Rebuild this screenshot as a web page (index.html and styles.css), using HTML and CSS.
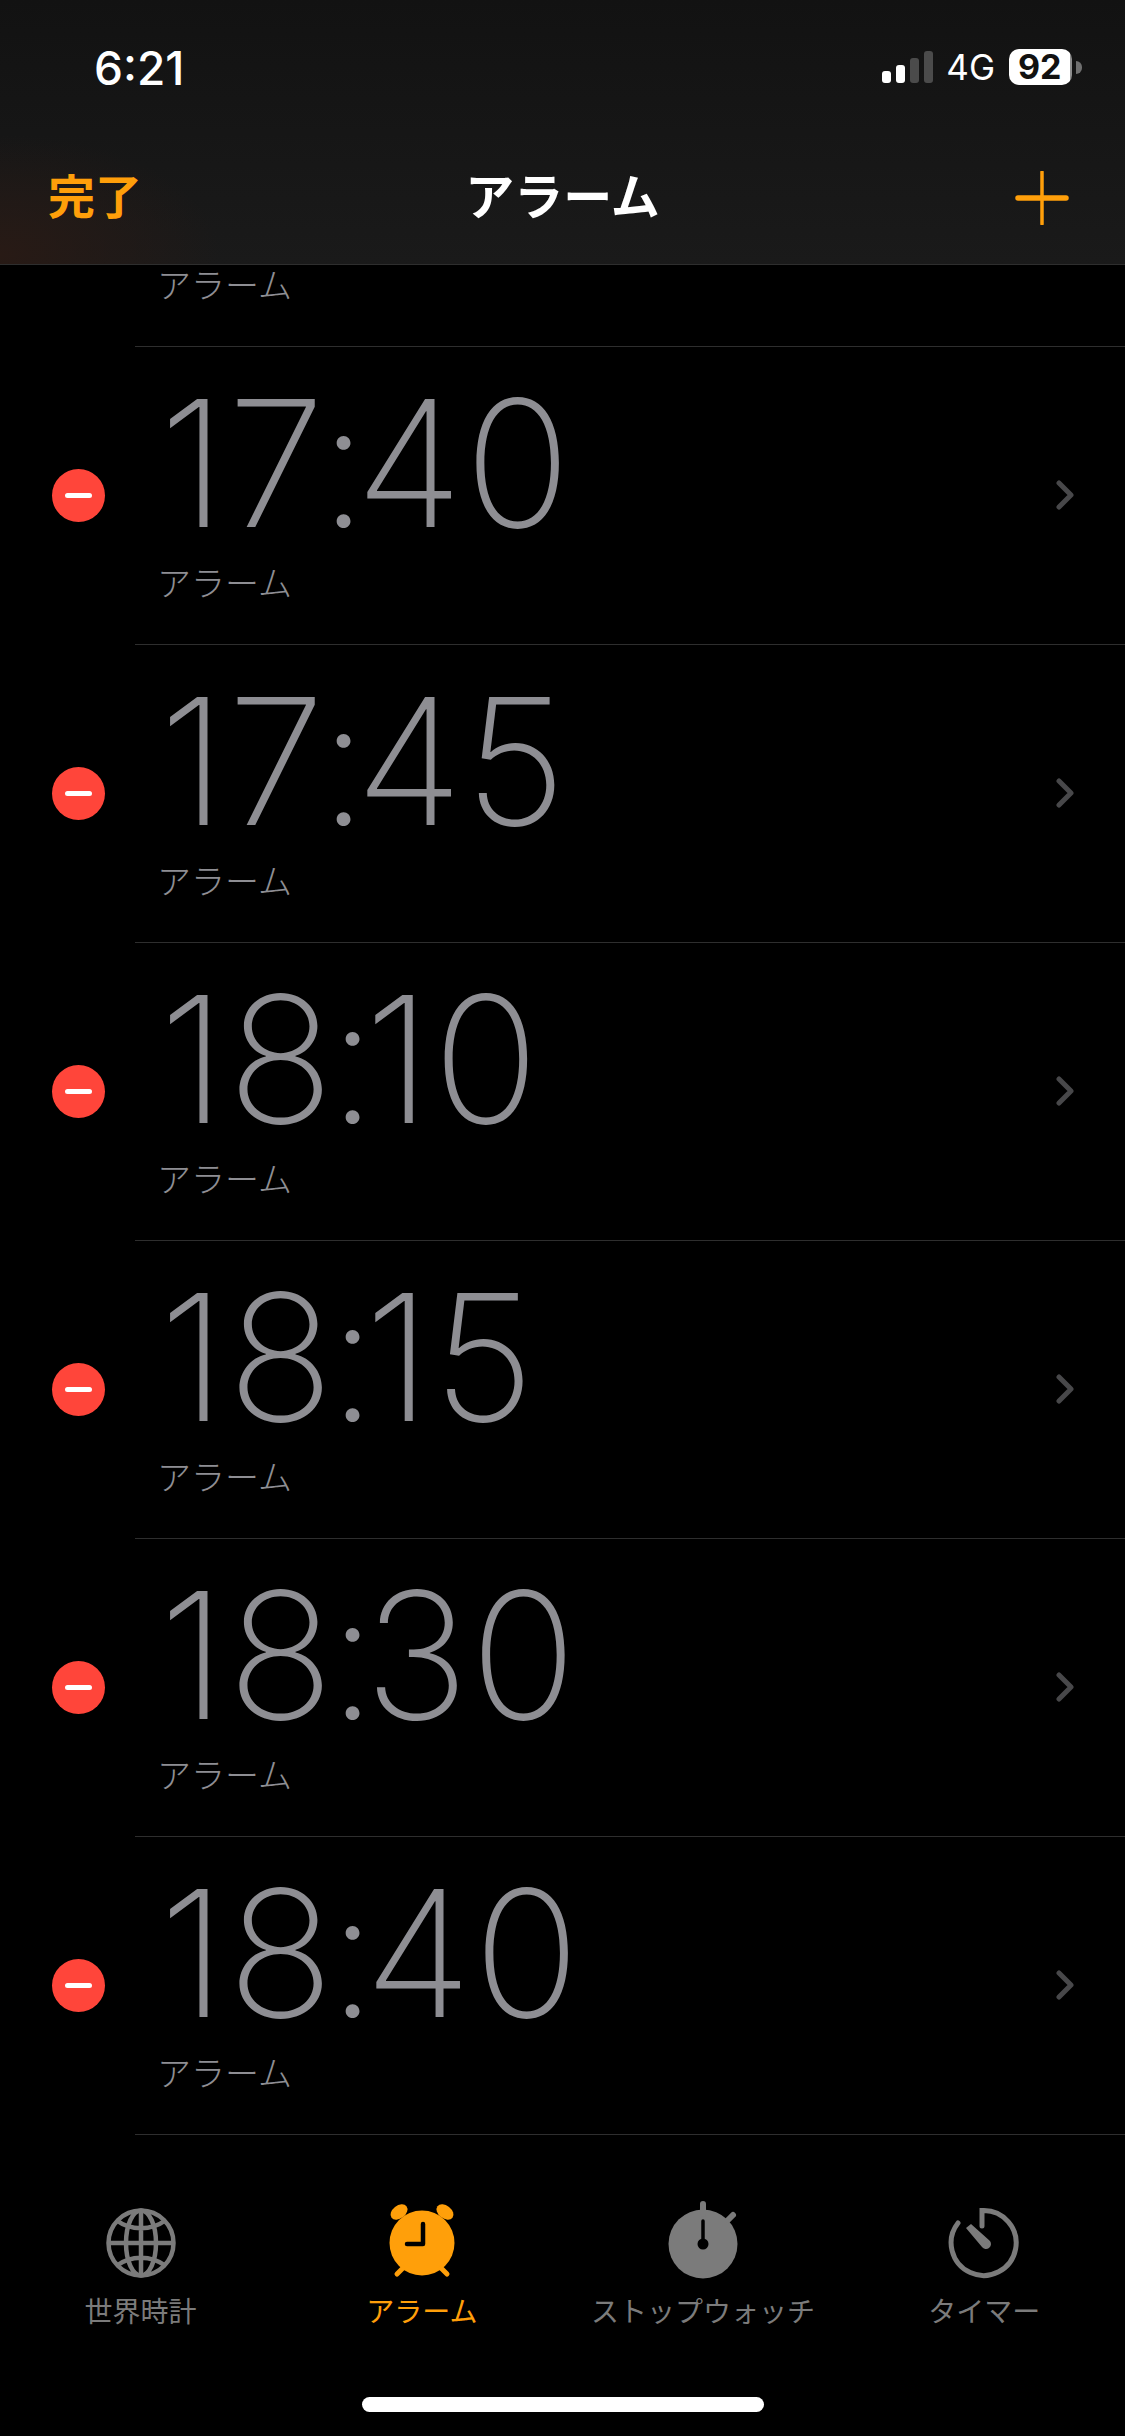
FILE: index.html
```html
<!DOCTYPE html>
<html lang="ja">
<head>
    <meta charset="UTF-8">
    <meta name="viewport" content="width=device-width, initial-scale=1.0">
    <title>アラーム</title>
    <link rel="stylesheet" href="styles.css">
</head>
<body>
    <div class="screen">

        <header class="top">
            <div class="status">
                <span class="clock">6:21</span>
                <div class="status-right">
                    <div class="signal">
                        <i class="bar b1"></i><i class="bar b2"></i><i class="bar b3 off"></i><i class="bar b4 off"></i>
                    </div>
                    <span class="net">4G</span>
                    <div class="battery"><span>92</span></div>
                    <i class="battery-cap"></i>
                </div>
            </div>
            <nav class="navbar">
                <span class="done">完了</span>
                <span class="title">アラーム</span>
                <div class="nav-right">
                    <svg class="plus" viewBox="0 0 54 54"><path d="M3 27H51" stroke="#ff9f0a" stroke-width="5.5" stroke-linecap="round"/><path d="M27 1V53" stroke="#ff9f0a" stroke-width="3.5" stroke-linecap="round"/></svg>
                </div>
            </nav>
        </header>

        <main class="list">
            <div class="row-cut"><div class="label">アラーム</div></div>

            <div class="row">
                <div class="minus"><i></i></div>
                <div class="row-body">
                    <div class="info"><div class="time">17<span class="colon">:</span>40</div><div class="label">アラーム</div></div>
                    <svg class="chevron" viewBox="0 0 20 32"><path d="M3 4L15 16L3 28"/></svg>
                </div>
            </div>
            <div class="row">
                <div class="minus"><i></i></div>
                <div class="row-body">
                    <div class="info"><div class="time">17<span class="colon">:</span>45</div><div class="label">アラーム</div></div>
                    <svg class="chevron" viewBox="0 0 20 32"><path d="M3 4L15 16L3 28"/></svg>
                </div>
            </div>
            <div class="row">
                <div class="minus"><i></i></div>
                <div class="row-body">
                    <div class="info"><div class="time">18<span class="colon">:</span>10</div><div class="label">アラーム</div></div>
                    <svg class="chevron" viewBox="0 0 20 32"><path d="M3 4L15 16L3 28"/></svg>
                </div>
            </div>
            <div class="row">
                <div class="minus"><i></i></div>
                <div class="row-body">
                    <div class="info"><div class="time">18<span class="colon">:</span>15</div><div class="label">アラーム</div></div>
                    <svg class="chevron" viewBox="0 0 20 32"><path d="M3 4L15 16L3 28"/></svg>
                </div>
            </div>
            <div class="row">
                <div class="minus"><i></i></div>
                <div class="row-body">
                    <div class="info"><div class="time">18<span class="colon">:</span>30</div><div class="label">アラーム</div></div>
                    <svg class="chevron" viewBox="0 0 20 32"><path d="M3 4L15 16L3 28"/></svg>
                </div>
            </div>
            <div class="row">
                <div class="minus"><i></i></div>
                <div class="row-body">
                    <div class="info"><div class="time">18<span class="colon">:</span>40</div><div class="label">アラーム</div></div>
                    <svg class="chevron" viewBox="0 0 20 32"><path d="M3 4L15 16L3 28"/></svg>
                </div>
            </div>
        </main>

        <footer class="tabs">
            <div class="tab">
                <svg class="tab-icon" viewBox="0 0 80 80" fill="none" stroke="#7b7b7b" stroke-width="4.5">
                    <circle cx="40" cy="43" r="32.5"/>
                    <ellipse cx="40" cy="43" rx="15" ry="32.5"/>
                    <path d="M40 10V76M7 43H73M15 20C30 31 50 31 65 20M15 66C30 55 50 55 65 66"/>
                </svg>
                <span>世界時計</span>
            </div>
            <div class="tab active">
                <svg class="tab-icon" viewBox="0 0 80 80">
                    <circle cx="40" cy="43" r="32.5" fill="#ff9f0a"/>
                    <ellipse cx="17" cy="12" rx="9.5" ry="6.5" transform="rotate(-38 17 12)" fill="#ff9f0a"/>
                    <ellipse cx="63" cy="12" rx="9.5" ry="6.5" transform="rotate(38 63 12)" fill="#ff9f0a"/>
                    <path d="M15 74L21 68M65 74L59 68" stroke="#ff9f0a" stroke-width="5" stroke-linecap="round"/>
                    <path d="M41 24V44H25" fill="none" stroke="#000" stroke-width="4.5" stroke-linecap="round" stroke-linejoin="round"/>
                </svg>
                <span>アラーム</span>
            </div>
            <div class="tab">
                <svg class="tab-icon" viewBox="0 0 80 80">
                    <circle cx="40" cy="44" r="34.5" fill="#7b7b7b"/>
                    <path d="M40 4V14M65 20L70 15" stroke="#7b7b7b" stroke-width="6" stroke-linecap="round"/>
                    <path d="M40 21V44" stroke="#000" stroke-width="3.5" stroke-linecap="round"/>
                    <circle cx="40" cy="44" r="5.5" fill="#000"/>
                </svg>
                <span>ストップウォッチ</span>
            </div>
            <div class="tab">
                <svg class="tab-icon" viewBox="0 0 80 80" fill="none">
                    <path d="M38 26V10.5A32.5 32.5 0 1 1 14 23" stroke="#7b7b7b" stroke-width="5" stroke-linecap="round"/>
                    <path d="M22 28L27 24L46 41A5 5 0 0 1 38 47Z" fill="#7b7b7b"/>
                </svg>
                <span>タイマー</span>
            </div>
        </footer>

        <div class="home-bar"><i></i></div>
    </div>
</body>
</html>
```

FILE: styles.css
```css
* {
    box-sizing: border-box;
}
body {
    margin: 0;
    background-color: #000;
}
.screen {
    width: 1125px;
    height: 2436px;
    overflow: hidden;
    display: flex;
    flex-direction: column;
    background-color: #000;
    font-family: "Inter", "Noto Sans CJK JP", sans-serif;
}

/* top bar */
.top {
    height: 265px;
    flex: none;
    border-bottom: 1px solid #2e2e2e;
    background: radial-gradient(ellipse 220px 120px at 0 255px, #281a15, rgba(40, 26, 21, 0)), linear-gradient(#121212, #1a1a1a);
}
.status {
    height: 137px;
    padding: 44px 43px 0 94px;
    display: flex;
    justify-content: space-between;
    align-items: flex-start;
}
.clock {
    font-size: 46px;
    line-height: 48px;
    font-weight: 500;
    color: #fff;
}
.status-right {
    display: flex;
    align-items: center;
    height: 46px;
}
.signal {
    display: flex;
    align-items: flex-end;
    gap: 5px;
    height: 32px;
    margin-right: 13px;
}
.bar {
    width: 9px;
    border-radius: 3px;
    background-color: #fff;
}
.bar.off {
    background-color: #4b4b4b;
}
.b1 { height: 12px; }
.b2 { height: 18px; }
.b3 { height: 25px; }
.b4 { height: 32px; }
.net {
    font-size: 35px;
    line-height: 46px;
    color: #fff;
    margin-right: 14px;
}
.battery {
    width: 63px;
    height: 36px;
    border-radius: 10px;
    display: flex;
    align-items: center;
    padding-left: 9px;
    background: linear-gradient(90deg, #fff 61px, #8e8e8e 61px);
}
.battery span {
    font-size: 34px;
    font-weight: 700;
    line-height: 36px;
    color: #111;
}
.battery-cap {
    width: 6px;
    height: 13px;
    margin-left: 4px;
    border-radius: 0 7px 7px 0;
    background-color: #6f6f6f;
}
.navbar {
    height: 127px;
    padding: 0 48px;
    display: grid;
    grid-template-columns: 1fr auto 1fr;
    align-items: start;
}
.done {
    font-size: 47px;
    line-height: 60px;
    font-weight: 700;
    margin-top: 27px;
    color: #ff9f0a;
    font-family: "Noto Sans CJK JP", sans-serif;
}
.title {
    font-size: 49px;
    line-height: 60px;
    font-weight: 700;
    margin-top: 27px;
    color: #fff;
    font-family: "Noto Sans CJK JP", sans-serif;
}
.nav-right {
    display: flex;
    justify-content: flex-end;
    padding-right: 8px;
}
.plus {
    width: 54px;
    height: 54px;
    margin-top: 34px;
}

/* rows */
.list {
    flex: 1;
}
.row-cut {
    height: 82px;
    margin-left: 135px;
    padding-left: 22px;
    display: flex;
    border-bottom: 1px solid #2e2e2e;
}
.row-cut .label {
    margin-top: -3px;
}
.row {
    height: 298px;
    display: flex;
    align-items: stretch;
}
.minus {
    width: 53px;
    height: 53px;
    margin: 122px 30px 0 52px;
    flex: none;
    border-radius: 50%;
    background-color: #ff453a;
    display: flex;
    align-items: center;
    justify-content: center;
}
.minus i {
    width: 27px;
    height: 5px;
    border-radius: 3px;
    background-color: #fff;
}
.row-body {
    flex: 1;
    display: flex;
    justify-content: space-between;
    border-bottom: 1px solid #2e2e2e;
    padding: 0 49px 0 22px;
}
.time {
    font-size: 176px;
    font-weight: 200;
    line-height: 176px;
    letter-spacing: 1.5px;
    white-space: nowrap;
    margin: 28px 0 0 2px;
    color: #8e8e93;
}
/* the colon sits tighter than the font wants */
.colon {
    display: inline-block;
    width: 29px;
    text-indent: -7px;
    letter-spacing: -6px;
}
.label {
    font-family: "Noto Sans CJK JP", sans-serif;
    font-size: 34px;
    font-weight: 300;
    line-height: 44px;
    color: #8e8e93;
}
.info .label {
    margin-top: 9px;
}
.chevron {
    width: 20px;
    height: 32px;
    margin-top: 132px;
    fill: none;
    stroke: #48484a;
    stroke-width: 5;
    stroke-linecap: round;
    stroke-linejoin: round;
}

/* tab bar */
.tabs {
    height: 301px;
    flex: none;
    padding-top: 65px;
    display: grid;
    grid-template-columns: repeat(4, 1fr);
}
.tab {
    display: flex;
    flex-direction: column;
    align-items: center;
    font-family: "Noto Sans CJK JP", sans-serif;
    font-size: 28px;
    line-height: 36px;
    color: #7b7b7b;
}
.tab.active {
    color: #ff9f0a;
}
.tab-icon {
    width: 80px;
    height: 80px;
    margin-bottom: 12px;
    flex: none;
}
.home-bar {
    position: absolute;
    top: 2397px;
    left: 0;
    width: 1125px;
    display: flex;
    justify-content: center;
}
.home-bar i {
    width: 402px;
    height: 15px;
    border-radius: 8px;
    background-color: #fff;
}
```
